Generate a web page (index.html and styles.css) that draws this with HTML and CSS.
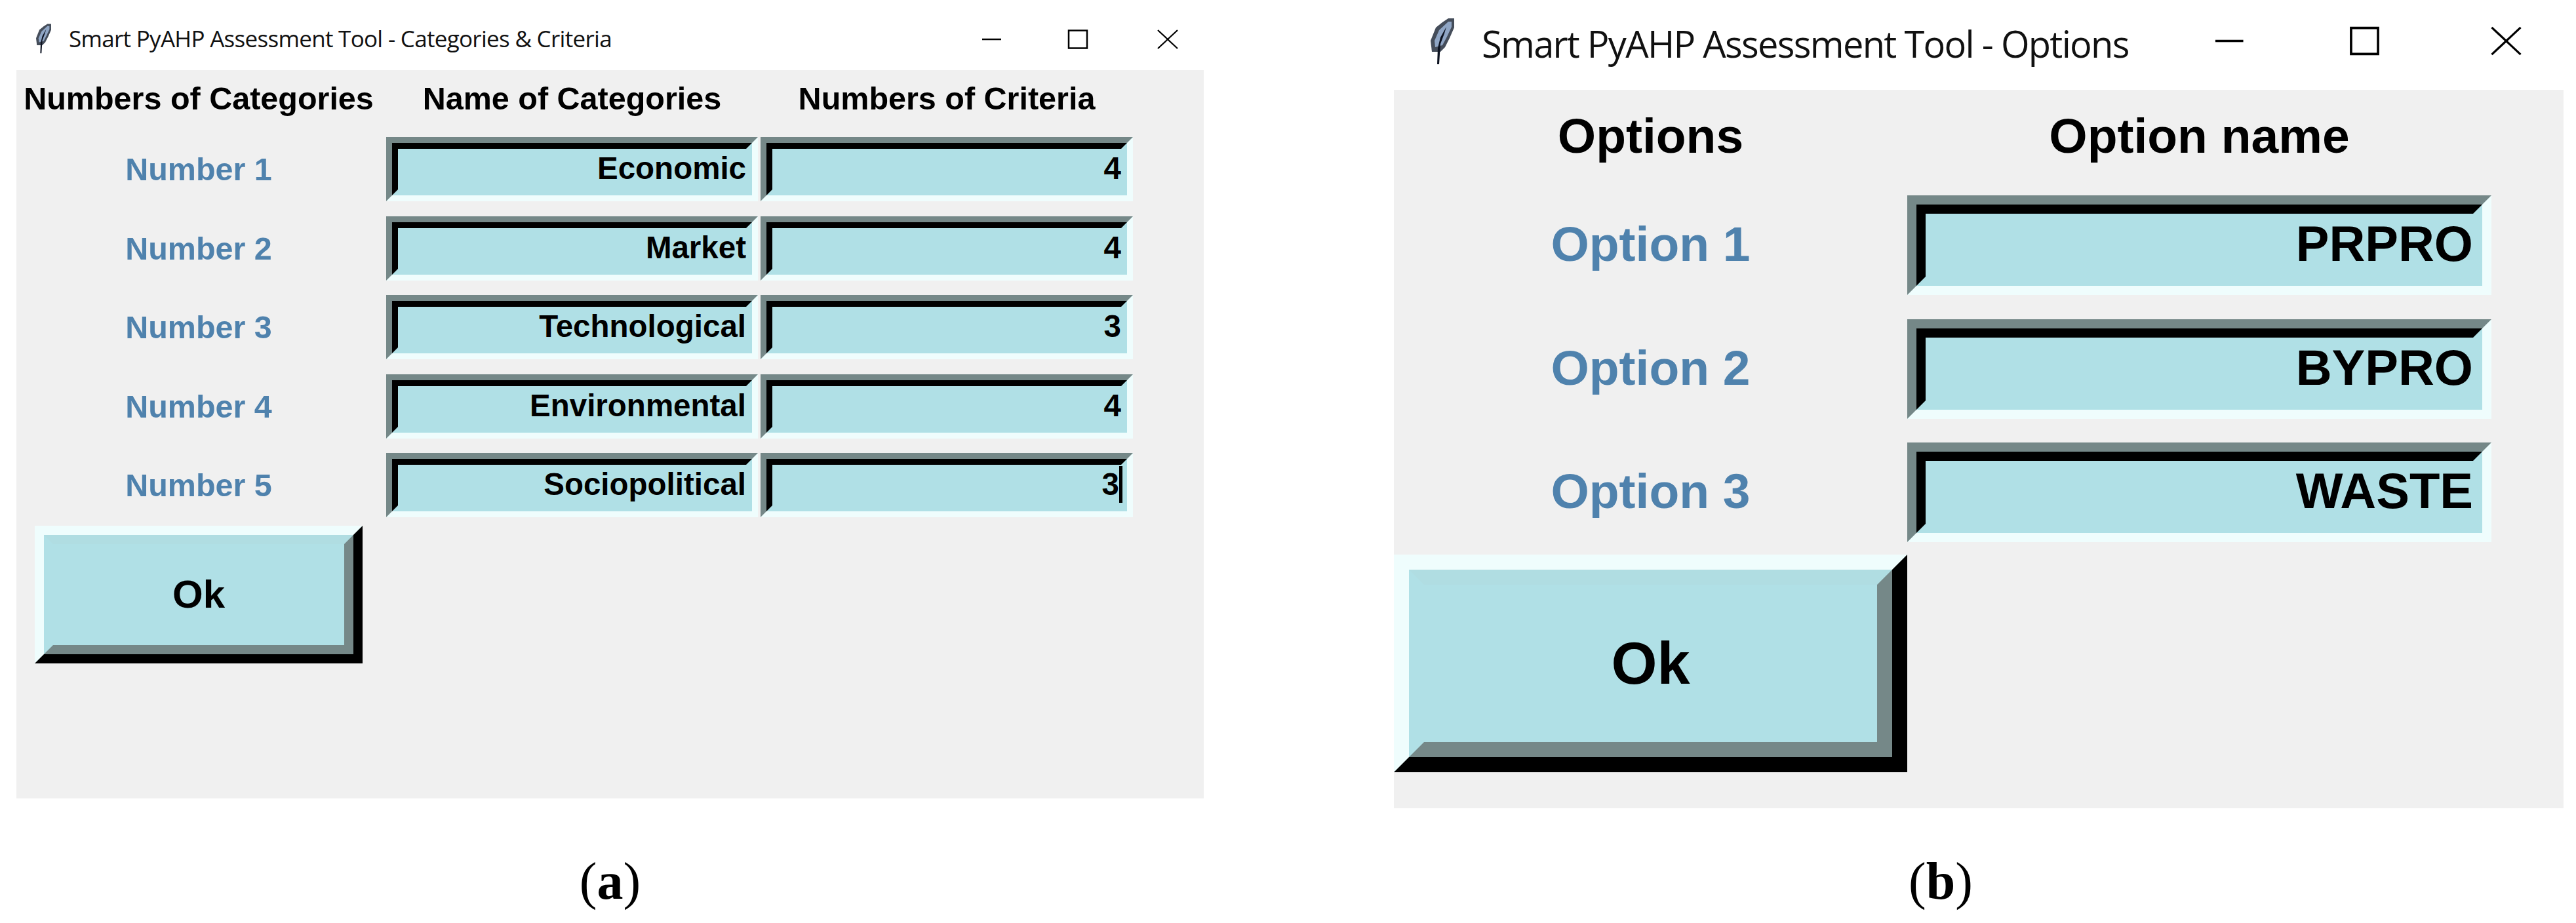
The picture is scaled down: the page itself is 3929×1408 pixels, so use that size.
FILE: index.html
```html
<!DOCTYPE html>
<html lang="en">
<head>
    <meta charset="UTF-8">
    <title>Smart PyAHP Assessment Tool</title>
    <link rel="stylesheet" href="styles.css">
</head>
<body>

<div class="figures">
    <figure class="figure figure-a">
        <div class="titlebar">
            <svg class="feather" viewBox="0 0 36 71">
                <path d="M27 1 L36 1 L36 15 L29 31 L22 45 L15 52 L2 52 L0 35 L8 15 L18 7 Z" fill="#454d5a"/>
                <path d="M27 6 L32 6 L32 14 L25 29 L18 42 L7 45 L6 35 L13 19 Z" fill="#8fa5c4"/>
                <path d="M24 14 L21 24 L15 40 L13 71 L10 71 L11 46 L15 30 Z" fill="#0c1220"/>
            </svg>
            <span class="title">Smart PyAHP Assessment Tool - Categories &amp; Criteria</span>
            <div class="controls">
                <svg class="ctl" viewBox="0 0 32 30"><path d="M2 15 H31" stroke="#000" stroke-width="2.5"/></svg>
                <svg class="ctl" viewBox="0 0 32 30"><path d="M2 1.5 H30 V28.5 H2 Z" stroke="#000" stroke-width="2.5" fill="none"/></svg>
                <svg class="ctl" viewBox="0 0 32 30"><path d="M1 1 L31 29 M31 1 L1 29" stroke="#000" stroke-width="2.2" fill="none"/></svg>
            </div>
        </div>
        <div class="window">
            <div class="grid">
                <div class="head">Numbers of Categories</div>
                <div class="head">Name of Categories</div>
                <div class="head">Numbers of Criteria</div>

                <div class="label">Number 1</div>
                <div class="entry"><div class="entry-in">Economic</div></div>
                <div class="entry"><div class="entry-in">4</div></div>

                <div class="label">Number 2</div>
                <div class="entry"><div class="entry-in">Market</div></div>
                <div class="entry"><div class="entry-in">4</div></div>

                <div class="label">Number 3</div>
                <div class="entry"><div class="entry-in">Technological</div></div>
                <div class="entry"><div class="entry-in">3</div></div>

                <div class="label">Number 4</div>
                <div class="entry"><div class="entry-in">Environmental</div></div>
                <div class="entry"><div class="entry-in">4</div></div>

                <div class="label">Number 5</div>
                <div class="entry"><div class="entry-in">Sociopolitical</div></div>
                <div class="entry"><div class="entry-in">3<span class="cursor"></span></div></div>
            </div>
            <div class="btn"><div class="btn-in">Ok</div></div>
        </div>
        <figcaption class="caption">(<b>a</b>)</figcaption>
    </figure>

    <figure class="figure figure-b">
        <div class="titlebar">
            <svg class="feather" viewBox="0 0 36 71">
                <path d="M27 1 L36 1 L36 15 L29 31 L22 45 L15 52 L2 52 L0 35 L8 15 L18 7 Z" fill="#454d5a"/>
                <path d="M27 6 L32 6 L32 14 L25 29 L18 42 L7 45 L6 35 L13 19 Z" fill="#8fa5c4"/>
                <path d="M24 14 L21 24 L15 40 L13 71 L10 71 L11 46 L15 30 Z" fill="#0c1220"/>
            </svg>
            <span class="title">Smart PyAHP Assessment Tool - Options</span>
            <div class="controls">
                <svg class="ctl" viewBox="0 0 32 30"><path d="M2 15 H31" stroke="#000" stroke-width="2.5"/></svg>
                <svg class="ctl" viewBox="0 0 32 30"><path d="M2 1.5 H30 V28.5 H2 Z" stroke="#000" stroke-width="2.5" fill="none"/></svg>
                <svg class="ctl" viewBox="0 0 32 30"><path d="M1 1 L31 29 M31 1 L1 29" stroke="#000" stroke-width="2.2" fill="none"/></svg>
            </div>
        </div>
        <div class="window">
            <div class="grid">
                <div class="head">Options</div>
                <div class="head">Option name</div>

                <div class="label">Option 1</div>
                <div class="entry"><div class="entry-in">PRPRO</div></div>

                <div class="label">Option 2</div>
                <div class="entry"><div class="entry-in">BYPRO</div></div>

                <div class="label">Option 3</div>
                <div class="entry"><div class="entry-in">WASTE</div></div>
            </div>
            <div class="btn"><div class="btn-in">Ok</div></div>
        </div>
        <figcaption class="caption">(<b>b</b>)</figcaption>
    </figure>
</div>

</body>
</html>
```

FILE: styles.css
```css
body {
    margin: 0;
    background-color: #fff;
    font-family: "Liberation Sans", Arial, sans-serif;
    color: #000;
}

.figures {
    display: flex;
    align-items: flex-start;
}

.figure {
    margin: 0;
}

.figure-a {
    width: 1811px;
    margin-left: 25px;
}

.figure-b {
    width: 1784px;
    margin-left: 290px;
}

/* title bars */
.titlebar {
    display: flex;
    align-items: flex-start;
    font-family: "Open Sans", sans-serif;
    color: #111;
}

.figure-a .titlebar {
    height: 107px;
    font-size: 35px;
    letter-spacing: -0.7px;
}

.figure-b .titlebar {
    height: 137px;
    font-size: 56px;
    letter-spacing: -1.7px;
}

.feather {
    flex: none;
}

.figure-a .feather {
    width: 23px;
    height: 47px;
    margin: 35px 0 0 30px;
}

.figure-b .feather {
    width: 36px;
    height: 71px;
    margin: 27px 0 0 56px;
}

.figure-a .title {
    margin: 37px 0 0 27px;
    line-height: 44px;
}

.figure-b .title {
    margin: 32px 0 0 42px;
    line-height: 68px;
}

.controls {
    display: flex;
    margin-left: auto;
}

.figure-a .controls {
    margin-top: 45px;
    margin-right: 39px;
    gap: 100px;
}

.figure-a .ctl {
    width: 32px;
    height: 30px;
}

.figure-a .ctl:last-child {
    margin-left: 5px;
}

.figure-b .controls {
    margin-top: 40px;
    margin-right: 64px;
    gap: 160px;
}

.figure-b .ctl {
    width: 47px;
    height: 45px;
}

.figure-b .ctl:last-child {
    margin-left: 9px;
}

/* window body */
.window {
    background-color: #f0f0f0;
}

.figure-a .window {
    height: 1111px;
}

.figure-b .window {
    height: 1096px;
}

.grid {
    display: grid;
    align-items: start;
}

.figure-a .grid {
    grid-template-columns: 560px 567px 568px;
    grid-template-rows: 79.4px repeat(5, 98px);
    column-gap: 4px;
    row-gap: 22.6px;
    font-size: 48.5px;
}

.figure-a .grid .head:first-child,
.figure-a .grid .label {
    margin-right: 4px;
}

.figure-b .grid {
    grid-template-columns: 783px 891px;
    grid-template-rows: 124.5px repeat(3, 152px);
    row-gap: 36.5px;
    font-size: 75px;
}

.head {
    text-align: center;
    font-weight: bold;
    white-space: nowrap;
}

.figure-a .head {
    line-height: 87px;
}

.figure-b .head {
    line-height: 140px;
}

.label {
    text-align: center;
    font-weight: bold;
    color: #4f82ad;
}

.figure-a .label {
    line-height: 98px;
}

.figure-b .label {
    line-height: 148px;
}

/* sunken tk entry, two bevel layers */
.entry {
    border-style: solid;
    border-color: #758888 #effdfd #effdfd #758888;
}

.entry-in {
    background-color: #b0e0e6;
    border-style: solid;
    border-color: #000 #b0e0e6 #b0e0e6 #000;
    text-align: right;
    font-weight: bold;
    white-space: nowrap;
}

.figure-a .entry {
    border-width: 9px;
}

.figure-a .entry-in {
    border-width: 9px;
    font-size: 47.5px;
    line-height: 60px;
    height: 62px;
}

.figure-b .entry {
    border-width: 14px;
}

.figure-b .entry-in {
    border-width: 14px;
    font-size: 76px;
    line-height: 92px;
    height: 96px;
}

.cursor {
    display: inline-block;
    width: 5px;
    height: 56px;
    background-color: #000;
    vertical-align: -12px;
    margin-right: -2px;
}

/* raised tk button */
.btn {
    border-style: solid;
    border-color: #effdfd #000 #000 #effdfd;
    box-sizing: border-box;
}

.btn-in {
    background-color: #b0e0e6;
    border-style: solid;
    border-color: #b0dde2 #758888 #758888 #b0e0e6;
    text-align: center;
    font-weight: bold;
}

.figure-a .btn {
    width: 500px;
    height: 210px;
    margin: 13px 0 0 28px;
    border-width: 14px;
}

.figure-a .btn-in {
    border-width: 14px;
    font-size: 60px;
    line-height: 154px;
}

.figure-b .btn {
    width: 783px;
    height: 332px;
    margin-top: 19px;
    border-width: 23px;
}

.figure-b .btn-in {
    border-width: 23px;
    font-size: 90px;
    line-height: 240px;
}

/* captions */
.caption {
    font-family: "Liberation Serif", "Times New Roman", serif;
    font-size: 80px;
    line-height: 100px;
    text-align: center;
}

.figure-a .caption {
    margin-top: 76px;
}

.figure-b .caption {
    margin-top: 61px;
    padding-right: 116px;
}
```
